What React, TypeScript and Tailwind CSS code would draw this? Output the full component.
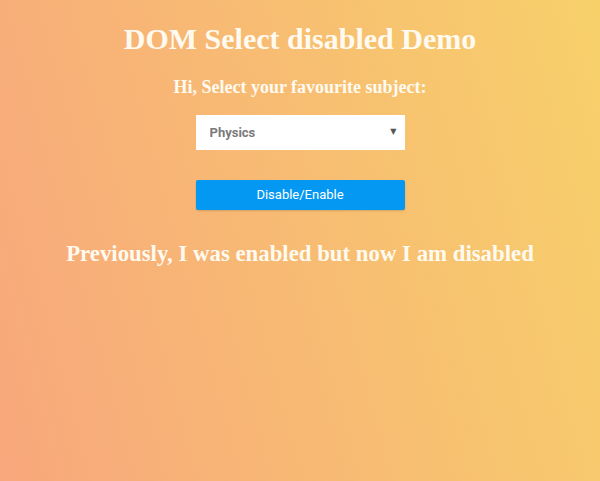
import React, { useState } from "react";

const App = () => {
  const [disabled, setDisabled] = useState(true);

  return (
    <div className="w-full min-h-[481px] bg-[linear-gradient(75deg,#f8a77c,#f7d06a)] font-['Liberation_Serif',serif] text-[#fffaf0] flex flex-col items-center">
      <h1 className="mt-[21px] text-[30px] leading-[35px] font-bold">DOM Select disabled Demo</h1>
      <h3 className="mt-[20px] text-[18px] leading-[22px] font-bold">Hi, Select your favourite subject:</h3>
      <div className="mt-[17px] relative w-[209px] h-[35px] bg-white">
        <select
          disabled={disabled}
          className="appearance-none w-full h-full bg-white pl-[14px] text-[13px] font-bold text-[#7a7a7a] font-['Roboto',sans-serif] outline-none"
        >
          <option>Physics</option>
          <option>Chemistry</option>
          <option>Maths</option>
        </select>
        <span className="absolute right-[8px] top-[11px] text-[8px] text-[#555] font-['DejaVu_Sans',sans-serif] pointer-events-none">▼</span>
      </div>
      <button
        onClick={() => setDisabled(!disabled)}
        className="mt-[30px] w-[209px] h-[30px] bg-[#0598f2] rounded-[2px] text-white text-[13px] font-['Roboto',sans-serif] shadow-[0_1px_2px_rgba(0,0,0,0.15)]"
      >
        Disable/Enable
      </button>
      <h2 className="mt-[31px] text-[22.8px] leading-[26px] font-bold">
        {disabled ? "Previously, I was enabled but now I am disabled" : "Previously, I was disabled but now I am enabled"}
      </h2>
    </div>
  );
};

export default App;
